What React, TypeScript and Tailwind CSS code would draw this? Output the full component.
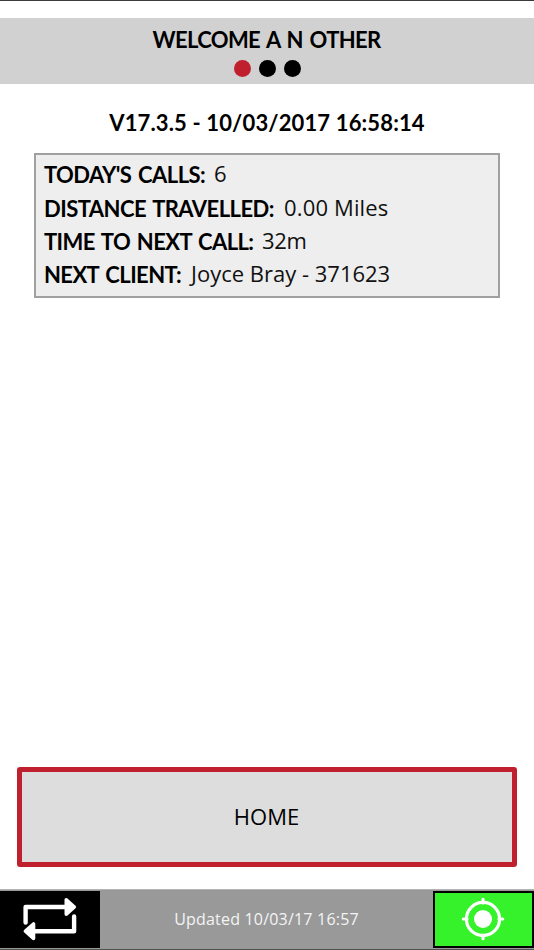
import { clsx } from 'clsx';

const details = [
  { label: "TODAY'S CALLS:", value: '6', labelClass: 'w-[161px] tracking-[-0.57px]', valueClass: '' },
  { label: 'DISTANCE TRAVELLED:', value: '0.00 Miles', labelClass: 'w-[231px] tracking-[-0.55px]', valueClass: 'tracking-[0.15px]' },
  { label: 'TIME TO NEXT CALL:', value: '32m', labelClass: 'w-[209px] tracking-[-0.6px]', valueClass: 'tracking-[-0.3px]' },
  { label: 'NEXT CLIENT:', value: 'Joyce Bray - 371623', labelClass: 'w-[138px] tracking-[-0.58px]', valueClass: '' },
];

const dots = ['bg-[#c01f2e]', 'bg-black', 'bg-black'];

function SyncIcon() {
  return (
    <svg width="54" height="44" viewBox="0 0 54 44" fill="none" stroke="#fff" strokeWidth="4.4" strokeLinecap="round" strokeLinejoin="round">
      <path d="M2.6 25.5V10H43" />
      <path d="M51.1 19.5V34.2H10" />
      <path d="M43.3 2.8V17.2L51.3 10Z" fill="#fff" strokeWidth="3.6" />
      <path d="M10.5 27V41.4L2.5 34.2Z" fill="#fff" strokeWidth="3.6" />
    </svg>
  );
}

function LocationIcon() {
  return (
    <svg width="44" height="44" viewBox="0 0 44 44" fill="none" stroke="#fff" strokeWidth="3.2" strokeLinecap="round">
      <circle cx="22" cy="22" r="16.6" />
      <circle cx="22" cy="22" r="9" fill="#fff" stroke="none" />
      <path d="M22 2.3V6M22 38V41.7M2.3 22H6M38 22H41.7" />
    </svg>
  );
}

export default function App() {
  return (
    <div className="flex h-[950px] w-[534px] flex-col overflow-hidden border-t border-[#3b3a3b] bg-white font-['Open_Sans','Noto_Sans',sans-serif] text-[22px] text-black">
      {/* Header */}
      <header className="mt-[17px] flex h-[66px] flex-col items-center bg-[#d1d1d1]">
        <h1 className="mt-[7px] mr-px font-['Lato',sans-serif] leading-[30px] font-bold tracking-[-0.65px] [word-spacing:2px] whitespace-nowrap">WELCOME A N OTHER</h1>
        <div className="mt-[4.5px] flex gap-2">
          {dots.map((color, i) => (
            <span key={i} className={clsx('size-[17px] rounded-full', color)} />
          ))}
        </div>
      </header>

      <h2 className="mt-[24px] text-center font-['Lato',sans-serif] leading-[30px] font-bold tracking-[0.14px] whitespace-nowrap">V17.3.5 - 10/03/2017 16:58:14</h2>

      {/* Call summary */}
      <section className="mt-[15px] ml-[34px] h-[145px] w-[466px] border-2 border-[#a0a0a0] bg-[#eee] pt-[2px] pl-[8px]">
        {details.map(d => (
          <div key={d.label} className="flex h-[33.4px] items-center whitespace-nowrap">
            <span className={clsx("mr-[9px] shrink-0 pt-[2px] font-['Lato',sans-serif] font-bold [word-spacing:2px]", d.labelClass)}>{d.label}</span>
            <span className={clsx('text-[#111]', d.valueClass)}>{d.value}</span>
          </div>
        ))}
      </section>

      <button className="mx-[17px] mt-auto mb-[22px] h-[100px] rounded-[3px] border-[5px] border-[#c01f2e] bg-[#ddd] pr-px pb-[2px]">
        HOME
      </button>

      {/* Status bar */}
      <footer className="flex h-[61px] items-center justify-between border-t border-b border-t-[#b4b4b4] border-b-[#505050] bg-[#999]">
        <button className="flex h-[57px] w-[100px] items-center justify-center bg-black pb-[2px]">
          <SyncIcon />
        </button>
        <span className="pb-[2px] text-[16px] tracking-[0.2px] text-[#f4f4f4]">Updated 10/03/17 16:57</span>
        <button className="flex h-[57px] w-[101px] items-center justify-center border-2 border-black bg-[#35f22a] pr-px pb-[2px]">
          <LocationIcon />
        </button>
      </footer>
    </div>
  );
}
